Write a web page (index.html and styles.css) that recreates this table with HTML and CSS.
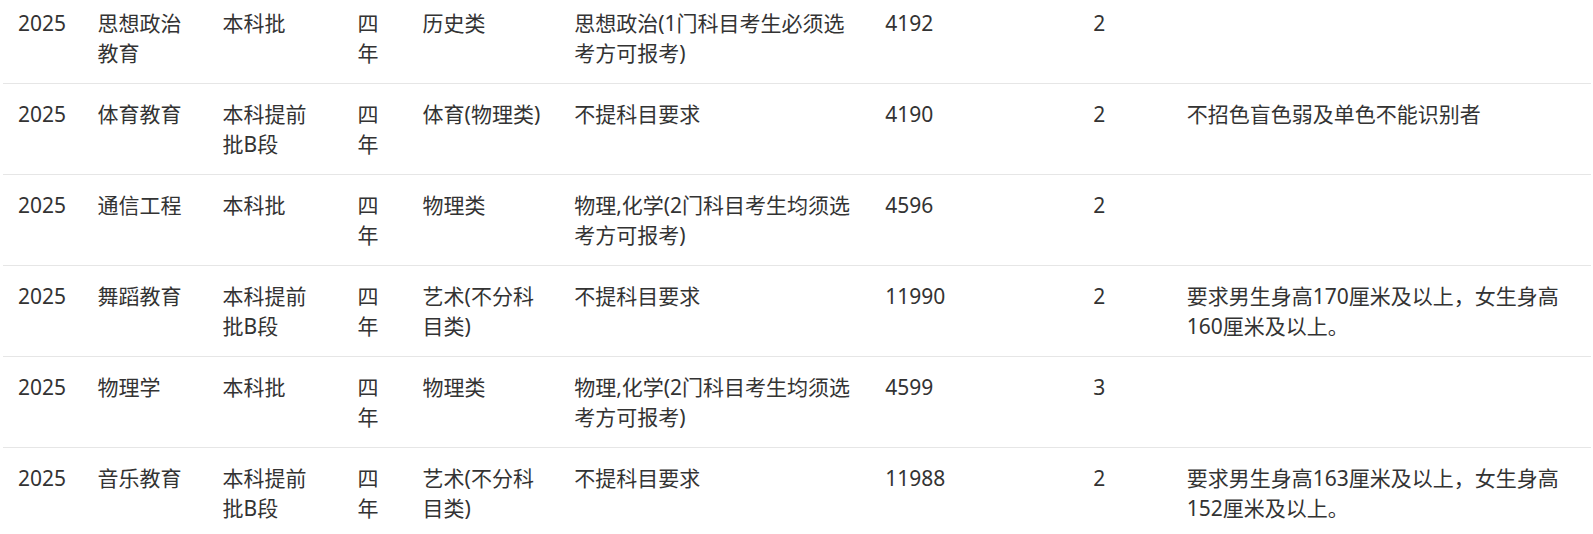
FILE: index.html
```html
<!DOCTYPE html>
<html lang="zh-CN">
<head>
<meta charset="utf-8">
<title>招生计划</title>
<link rel="stylesheet" href="styles.css">
</head>
<body>
<table class="plan">
  <colgroup>
    <col class="c-year">
    <col class="c-major">
    <col class="c-batch">
    <col class="c-len">
    <col class="c-type">
    <col class="c-subj">
    <col class="c-code">
    <col class="c-num">
    <col class="c-note">
  </colgroup>
  <tbody>
    <tr>
      <td>2025</td><td>思想政治教育</td><td>本科批</td><td>四年</td><td>历史类</td>
      <td>思想政治(1门科目考生必须选考方可报考)</td><td>4192</td><td>2</td><td></td>
    </tr>
    <tr>
      <td>2025</td><td>体育教育</td><td>本科提前批B段</td><td>四年</td><td>体育(物理类)</td>
      <td>不提科目要求</td><td>4190</td><td>2</td><td>不招色盲色弱及单色不能识别者</td>
    </tr>
    <tr>
      <td>2025</td><td>通信工程</td><td>本科批</td><td>四年</td><td>物理类</td>
      <td>物理,化学(2门科目考生均须选考方可报考)</td><td>4596</td><td>2</td><td></td>
    </tr>
    <tr>
      <td>2025</td><td>舞蹈教育</td><td>本科提前批B段</td><td>四年</td><td>艺术(不分科目类)</td>
      <td>不提科目要求</td><td>11990</td><td>2</td><td>要求男生身高170厘米及以上，女生身高160厘米及以上。</td>
    </tr>
    <tr>
      <td>2025</td><td>物理学</td><td>本科批</td><td>四年</td><td>物理类</td>
      <td>物理,化学(2门科目考生均须选考方可报考)</td><td>4599</td><td>3</td><td></td>
    </tr>
    <tr>
      <td>2025</td><td>音乐教育</td><td>本科提前批B段</td><td>四年</td><td>艺术(不分科目类)</td>
      <td>不提科目要求</td><td>11988</td><td>2</td><td>要求男生身高163厘米及以上，女生身高152厘米及以上。</td>
    </tr>
  </tbody>
</table>
</body>
</html>
```

FILE: styles.css
```css
html, body {
  margin: 0;
  padding: 0;
  background: #ffffff;
}

body {
  font-family: "Noto Sans", "Noto Sans CJK SC", sans-serif;
  font-size: 21px;
  line-height: 30px;
  color: #333333;
  overflow: hidden;
}

.plan {
  table-layout: fixed;
  border-collapse: collapse;
  width: 1588px;
  margin: -7px 0 0 3px;
}

.c-year  { width: 79.5px; }
.c-major { width: 125px; }
.c-batch { width: 135px; }
.c-len   { width: 65px; }
.c-type  { width: 151.5px; }
.c-subj  { width: 311px; }
.c-code  { width: 208px; }
.c-num   { width: 93.5px; }
.c-note  { width: 419px; }

.plan td {
  vertical-align: top;
  padding: 15px 17px 15px 15px;
  border-bottom: 1px solid #e6e6e6;
  word-break: normal;
}
```
